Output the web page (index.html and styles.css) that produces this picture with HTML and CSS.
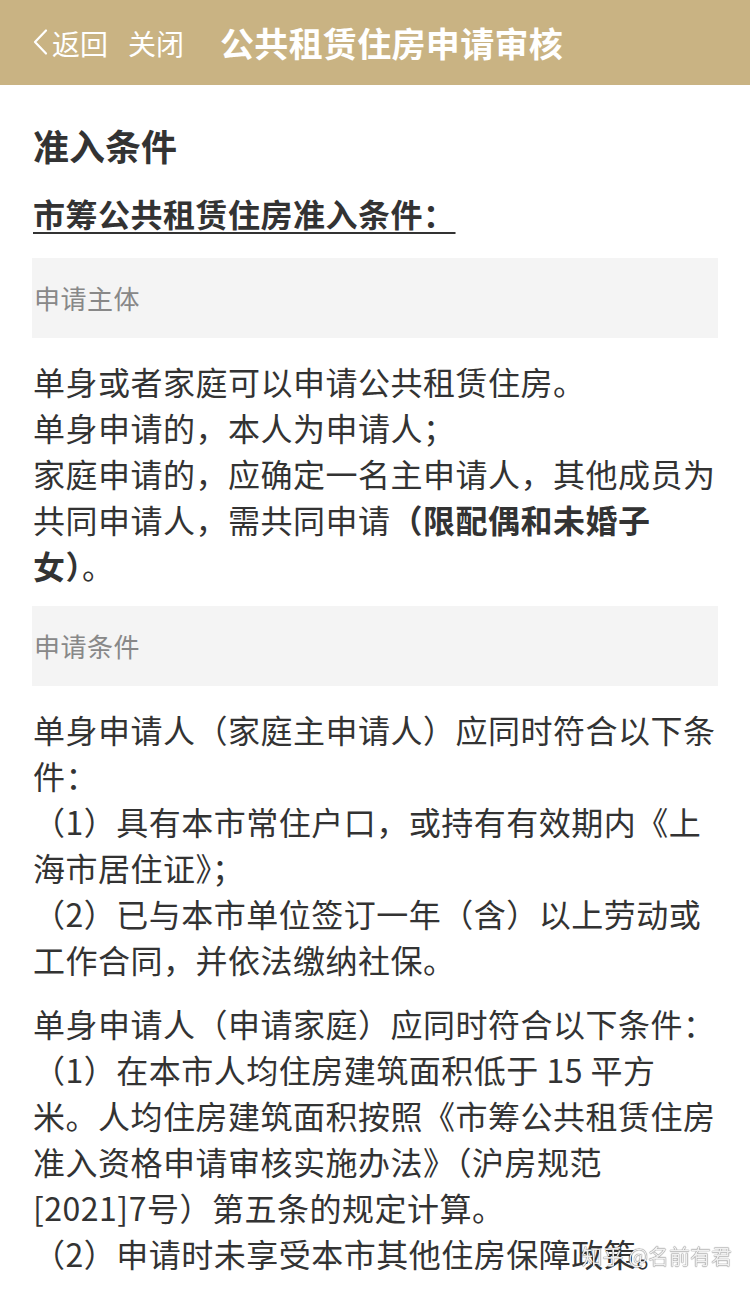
FILE: index.html
```html
<!DOCTYPE html>
<html lang="zh-CN">
<head>
<meta charset="utf-8">
<title>公共租赁住房申请审核</title>
<link rel="stylesheet" href="styles.css">
</head>
<body>
<header class="topbar">
  <a class="nav-back">
    <svg class="chev" width="16" height="28" viewBox="0 0 16 28"><path d="M14 2.5 L3 14 L14 25.5" fill="none" stroke="#fff" stroke-width="2.2" stroke-linecap="round" stroke-linejoin="round"/></svg>
    <span>返回</span>
  </a>
  <a class="nav-close">关闭</a>
  <h1 class="title">公共租赁住房申请审核</h1>
</header>
<main class="content">
  <h2 class="heading">准入条件</h2>
  <p class="subtitle"><u>市筹公共租赁住房准入条件：</u></p>
  <div class="section-box">申请主体</div>
  <p class="para">单身或者家庭可以申请公共租赁住房。<br>单身申请的，本人为申请人；<br>家庭申请的，应确定一名主申请人，其他成员为共同申请人，需共同申请<b>（限配偶和未婚子女）</b>。</p>
  <div class="section-box">申请条件</div>
  <p class="para">单身申请人（家庭主申请人）应同时符合以下条件：<br>（1）具有本市常住户口，或持有有效期内《上海市居住证》；<br>（2）已与本市单位签订一年（含）以上劳动或工作合同，并依法缴纳社保。</p>
  <p class="para">单身申请人（申请家庭）应同时符合以下条件：<br>（1）在本市人均住房建筑面积低于 15 平方米。人均住房建筑面积按照《市筹公共租赁住房准入资格申请审核实施办法》（沪房规范 [2021]7号）第五条的规定计算。<br>（2）申请时未享受本市其他住房保障政策。</p>
</main>
<div class="watermark">知乎 @名前有君</div>
</body>
</html>
```
FILE: styles.css
```css
html, body {
  margin: 0;
  padding: 0;
  background: #fff;
}
body {
  font-family: "Noto Sans CJK SC", "Noto Sans", sans-serif;
  color: #333;
}
.topbar {
  height: 85px;
  background: #c9b383;
  display: flex;
  align-items: center;
  padding: 0 0 0 32px;
  color: #fff;
}
.nav-back {
  display: flex;
  align-items: center;
  font-size: 28px;
  gap: 4px;
}
.chev {
  display: block;
  margin-top: -2px;
}
.nav-close {
  font-size: 28px;
  margin-left: 20px;
}
.title {
  margin: 0 0 0 36px;
  font-size: 34px;
  font-weight: 700;
  letter-spacing: 0.3px;
}
.content {
  padding: 0 32px;
}
.heading {
  margin: 35px 0 0;
  font-size: 36px;
  line-height: 50px;
  font-weight: 700;
  padding-left: 1px;
}
.subtitle {
  margin: 20px 0 0;
  font-size: 32px;
  line-height: 46px;
  font-weight: 700;
  letter-spacing: 0.5px;
  padding-left: 1px;
}
.subtitle u {
  text-decoration-thickness: 2px;
  text-underline-offset: 5px;
}
.section-box {
  margin-top: 22px;
  height: 80px;
  line-height: 80px;
  background: #f4f4f4;
  color: #888;
  font-size: 26px;
  letter-spacing: 0.5px;
  padding-left: 2px;
}
.para + .section-box {
  margin-top: 18px;
}
.para {
  margin: 20px 0 0;
  font-size: 32px;
  line-height: 46px;
  letter-spacing: 0.5px;
  padding-left: 1px;
}
.para + .para {
  margin-top: 18px;
}
.para b {
  font-weight: 700;
}
.watermark {
  position: fixed;
  right: 18px;
  bottom: 22px;
  font-size: 21px;
  line-height: 30px;
  color: rgba(255, 255, 255, 0.92);
  text-shadow: 0 0 1px rgba(0,0,0,0.55), 0 0 1px rgba(0,0,0,0.55);
}
```
